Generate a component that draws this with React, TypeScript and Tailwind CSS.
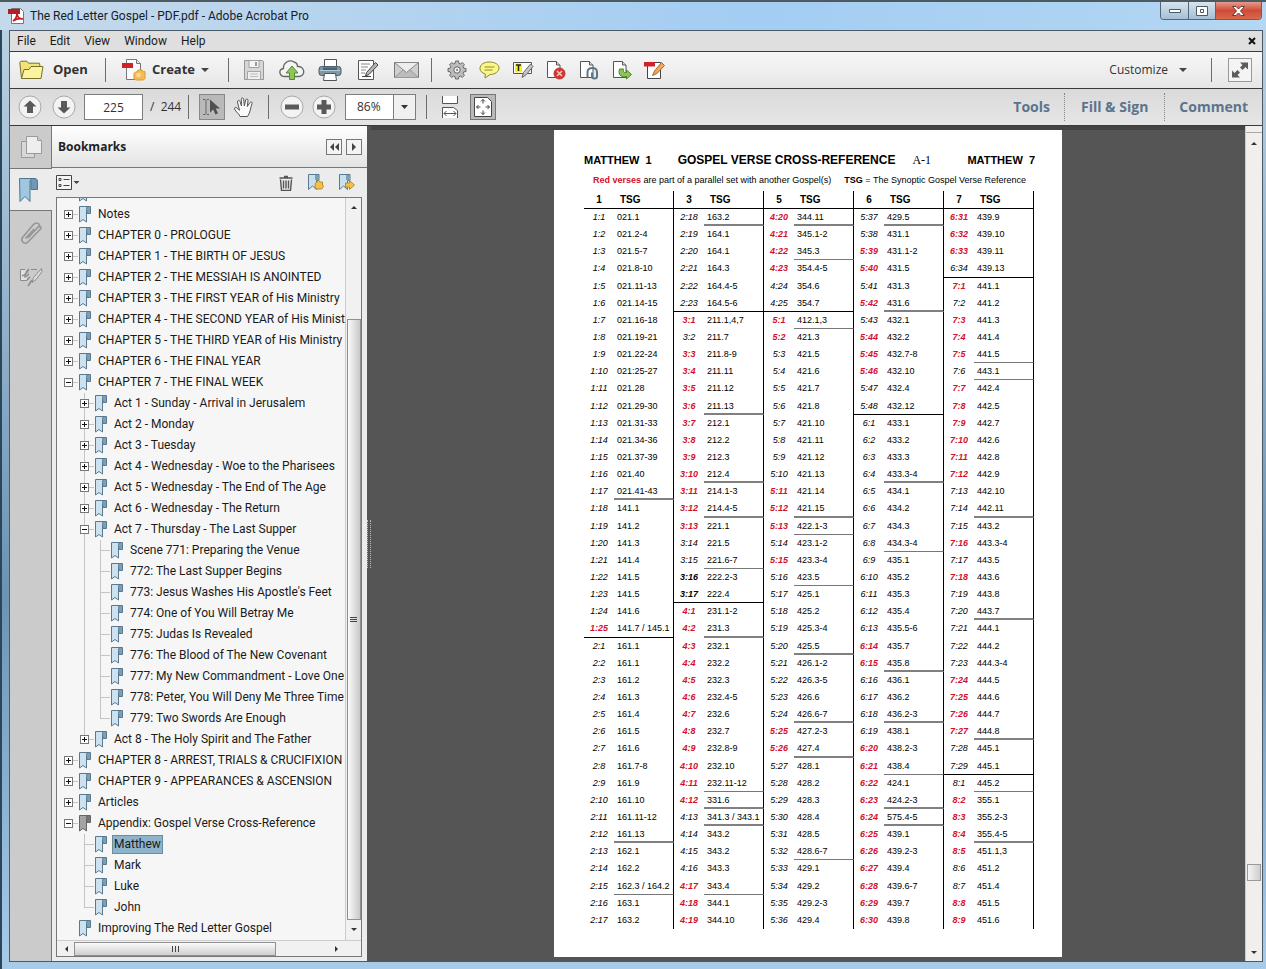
import React, { useState } from "react";
import clsx from "clsx";

interface Bookmark {
  title: string;
  state?: "open" | "closed";
  read?: boolean;
  children?: Bookmark[];
}

const bookmarks: Bookmark[] = [
  { title: "Notes", state: "closed" },
  { title: "CHAPTER 0 - PROLOGUE", state: "closed" },
  { title: "CHAPTER 1 - THE BIRTH OF JESUS", state: "closed" },
  { title: "CHAPTER 2 - THE MESSIAH IS ANOINTED", state: "closed" },
  { title: "CHAPTER 3 - THE FIRST YEAR of His Ministry", state: "closed" },
  { title: "CHAPTER 4 - THE SECOND YEAR of His Ministry", state: "closed" },
  { title: "CHAPTER 5 - THE THIRD YEAR of His Ministry", state: "closed" },
  { title: "CHAPTER 6 - THE FINAL YEAR", state: "closed" },
  {
    title: "CHAPTER 7 - THE FINAL WEEK",
    state: "open",
    children: [
      { title: "Act 1 - Sunday - Arrival in Jerusalem", state: "closed" },
      { title: "Act 2 - Monday", state: "closed" },
      { title: "Act 3 - Tuesday", state: "closed" },
      { title: "Act 4 - Wednesday - Woe to the Pharisees", state: "closed" },
      { title: "Act 5 - Wednesday - The End of The Age", state: "closed" },
      { title: "Act 6 - Wednesday - The Return", state: "closed" },
      {
        title: "Act 7 - Thursday - The Last Supper",
        state: "open",
        children: [
          { title: "Scene 771: Preparing the Venue" },
          { title: "772: The Last Supper Begins" },
          { title: "773: Jesus Washes His Apostle's Feet" },
          { title: "774: One of You Will Betray Me" },
          { title: "775: Judas Is Revealed" },
          { title: "776: The Blood of The New Covenant" },
          { title: "777: My New Commandment - Love One" },
          { title: "778: Peter, You Will Deny Me Three Time" },
          { title: "779: Two Swords Are Enough" },
        ],
      },
      { title: "Act 8 - The Holy Spirit and The Father", state: "closed" },
    ],
  },
  { title: "CHAPTER 8 - ARREST, TRIALS & CRUCIFIXION", state: "closed" },
  { title: "CHAPTER 9 - APPEARANCES & ASCENSION", state: "closed" },
  { title: "Articles", state: "closed" },
  {
    title: "Appendix: Gospel Verse Cross-Reference",
    state: "open",
    read: true,
    children: [
      { title: "Matthew" },
      { title: "Mark" },
      { title: "Luke" },
      { title: "John" },
    ],
  },
  { title: "Improving The Red Letter Gospel" },
];

// Prefix: * red verse, ! bold verse.
// Suffix: _ thin rule, = thick rule, | end of chapter.
const verseColumns = [
  {
    chapter: "1",
    verses:
      "1:1 021.1;1:2 021.2-4;1:3 021.5-7;1:4 021.8-10;1:5 021.11-13;1:6 021.14-15;1:7 021.16-18;1:8 021.19-21;1:9 021.22-24;1:10 021:25-27;1:11 021.28;1:12 021.29-30;1:13 021.31-33;1:14 021.34-36;1:15 021.37-39;1:16 021.40;1:17 021.41-43=;1:18 141.1;1:19 141.2;1:20 141.3;1:21 141.4;1:22 141.5;1:23 141.5;1:24 141.6;*1:25 141.7 / 145.1|;2:1 161.1;2:2 161.1;2:3 161.2;2:4 161.3;2:5 161.4;2:6 161.5;2:7 161.6;2:8 161.7-8;2:9 161.9;2:10 161.10;2:11 161.11-12;2:12 161.13=;2:13 162.1;2:14 162.2;2:15 162.3 / 164.2_;2:16 163.1;2:17 163.2",
  },
  {
    chapter: "3",
    verses:
      "2:18 163.2=;2:19 164.1;2:20 164.1;2:21 164.3;2:22 164.4-5;2:23 164.5-6|;*3:1 211.1,4,7;3:2 211.7;*3:3 211.8-9;*3:4 211.11;*3:5 211.12;*3:6 211.13=;*3:7 212.1;*3:8 212.2;*3:9 212.3;*3:10 212.4=;*3:11 214.1-3;*3:12 214.4-5=;*3:13 221.1;3:14 221.5;3:15 221.6-7_;!3:16 222.2-3;!3:17 222.4|;*4:1 231.1-2;*4:2 231.3=;*4:3 232.1;*4:4 232.2;*4:5 232.3;*4:6 232.4-5;*4:7 232.6;*4:8 232.7;*4:9 232.8-9;*4:10 232.10;*4:11 232.11-12_;*4:12 331.6=;4:13 341.3 / 343.1=;4:14 343.2;4:15 343.2;4:16 343.3;*4:17 343.4_;*4:18 344.1;*4:19 344.10",
  },
  {
    chapter: "5",
    verses:
      "*4:20 344.11=;*4:21 345.1-2;*4:22 345.3_;*4:23 354.4-5;4:24 354.6;4:25 354.7|;*5:1 412.1,3_;*5:2 421.3;5:3 421.5;5:4 421.6;5:5 421.7;5:6 421.8;5:7 421.10;5:8 421.11;5:9 421.12;5:10 421.13;*5:11 421.14;*5:12 421.15=;*5:13 422.1-3_;5:14 423.1-2;*5:15 423.3-4;5:16 423.5_;5:17 425.1;5:18 425.2;5:19 425.3-4;5:20 425.5=;5:21 426.1-2;5:22 426.3-5;5:23 426.6;5:24 426.6-7=;*5:25 427.2-3;*5:26 427.4=;5:27 428.1;5:28 428.2;5:29 428.3;5:30 428.4;5:31 428.5;5:32 428.6-7_;5:33 429.1;5:34 429.2;5:35 429.2-3;5:36 429.4",
  },
  {
    chapter: "6",
    verses:
      "5:37 429.5=;5:38 431.1;*5:39 431.1-2;*5:40 431.5;5:41 431.3;*5:42 431.6=;5:43 432.1;*5:44 432.2;*5:45 432.7-8;*5:46 432.10;5:47 432.4;5:48 432.12|;6:1 433.1;6:2 433.2;6:3 433.3;6:4 433.3-4=;6:5 434.1;6:6 434.2;6:7 434.3;6:8 434.3-4_;6:9 435.1;6:10 435.2;6:11 435.3;6:12 435.4;6:13 435.5-6;*6:14 435.7;*6:15 435.8=;6:16 436.1;6:17 436.2;6:18 436.2-3=;6:19 438.1;*6:20 438.2-3;*6:21 438.4_;*6:22 424.1;*6:23 424.2-3=;*6:24 575.4-5=;*6:25 439.1;*6:26 439.2-3;*6:27 439.4;*6:28 439.6-7;*6:29 439.7;*6:30 439.8",
  },
  {
    chapter: "7",
    verses:
      "*6:31 439.9;*6:32 439.10;*6:33 439.11;6:34 439.13|;*7:1 441.1;7:2 441.2;*7:3 441.3;*7:4 441.4;*7:5 441.5_;7:6 443.1_;*7:7 442.4;*7:8 442.5;*7:9 442.7;*7:10 442.6;*7:11 442.8;*7:12 442.9;7:13 442.10;7:14 442.11=;7:15 443.2;*7:16 443.3-4;7:17 443.5;*7:18 443.6;7:19 443.8;7:20 443.7=;7:21 444.1;7:22 444.2;7:23 444.3-4;*7:24 444.5;*7:25 444.6;*7:26 444.7;*7:27 444.8=;7:28 445.1;7:29 445.1|;8:1 445.2_;*8:2 355.1;*8:3 355.2-3;*8:4 355.4-5=;*8:5 451.1,3;8:6 451.2;8:7 451.4;*8:8 451.5;*8:9 451.6",
  },
];

const parseVerse = (source: string) => {
  const match = source.match(/^([*!]?)(\S+) (.+?)([_=|]?)$/);
  if (!match) {
    return { mark: "", verse: source, reference: "", rule: "" };
  }
  return {
    mark: match[1],
    verse: match[2],
    reference: match[3],
    rule: match[4],
  };
};

const columns = verseColumns.map((column) =>
  column.verses.split(";").map(parseVerse)
);

/* ---------- icons ---------- */

const AcrobatIcon = () => (
  <svg width="17" height="16" viewBox="0 0 17 16">
    <path d="M3.5 .5h9l3 3v12h-12z" fill="#fff" stroke="#777" />
    <path d="M0 1h12v5H0z" fill="#b51f24" />
    <path
      d="M5 13c3-2 4-5 4-8 0 4 2 6 6 6-4-1-7 0-10 2z"
      fill="none"
      stroke="#c8161d"
      strokeWidth="1.6"
    />
  </svg>
);

const FolderIcon = () => (
  <svg width="25" height="20" viewBox="0 0 25 20">
    <path
      d="M2.5 18.5L.8 2.5l1-1.3h6l1.7 2h11l.5 3"
      fill="#f1e27a"
      stroke="#77712f"
    />
    <path d="M2.5 18.5L5 9.500h5l2-3h12l-2 12z" fill="#fbf3a0" stroke="#77712f" />
  </svg>
);

const CreateIcon = () => (
  <svg width="24" height="22" viewBox="0 0 24 22">
    <path d="M4.500 .5h10l4 4v16h-14z" fill="#fafafa" stroke="#777" />
    <path d="M14.500 .5v4h4" fill="#ddd" stroke="#777" />
    <path d="M0 4h11v5H0z" fill="#cf2228" />
    <path
      d="M16 11h4l1.500 1.500h1.500v7l-1.500 1.500h-8l-1.500-1.500v-5l1.500-1.500h1.500z"
      fill="#f6bb52"
      stroke="#d99a38"
    />
    <path d="M14.500 14h4v4h-4z" fill="#fbd894" />
  </svg>
);

const SaveIcon = () => (
  <svg width="22" height="22" viewBox="0 0 22 22">
    <path d="M1.500 1.500h18l1 1v18h-19z" fill="#d6d6d6" stroke="#969696" />
    <path d="M6 1.500h10v7H6z" fill="#f5f5f5" stroke="#a0a0a0" />
    <path d="M12 3h2v4h-2z" fill="#999" />
    <path d="M4.500 12.500h13v8h-13z" fill="#efefef" stroke="#a5a5a5" />
    <path d="M7 15h8M7 17.500h8" stroke="#bbb" />
  </svg>
);

const CloudIcon = () => (
  <svg width="26" height="22" viewBox="0 0 26 22">
    <path
      d="M6 17.500c-6 0-7-7-1.500-8C4 4 10 0 15 3c2 .5 3.500 2.500 3.500 4.500C26 7 27 17 20 17.500z"
      fill="#f4f4f4"
      stroke="#666"
      strokeWidth="1.300"
    />
    <path
      d="M13 7l6 7h-3.500v6.500h-5V14H7z"
      fill="#8cc558"
      stroke="#5b8a35"
    />
  </svg>
);

const PrintIcon = () => (
  <svg width="24" height="24" viewBox="0 0 24 24">
    <path d="M6.500 1.500h12v9h-12z" fill="#fff" stroke="#555" />
    <rect x="1" y="8.500" width="22" height="9" rx="2.500" fill="#7f98a8" stroke="#4a6170" />
    <path d="M5 9.500h14v3H5z" fill="#4a6170" />
    <path d="M2 12.500h20" stroke="#b9cbd6" />
    <path d="M6.500 15.500h11l1 7H5.500z" fill="#fff" stroke="#555" />
  </svg>
);

const SignIcon = () => (
  <svg width="22" height="22" viewBox="0 0 22 22">
    <path d="M1.500 1.500h15v19h-15z" fill="#fff" stroke="#555" />
    <path d="M4 5h9M4 8h7M4 11h5M4 14h4" stroke="#888" />
    <path d="M21 6l-2.500-2.500-9 10-1 3.500 3.500-1.500z" fill="#b5b5b5" stroke="#444" />
    <path d="M5 17.500h9" stroke="#444" />
  </svg>
);

const MailIcon = () => (
  <svg width="25" height="18" viewBox="0 0 25 18">
    <path d="M.5 1.500h24v15H.5z" fill="#cfcfcf" stroke="#777" />
    <path d="M.5 16.500l9-8h6l9 8" fill="#bcbcbc" stroke="#999" />
    <path d="M.5 1.500l12 10 12-10z" fill="#ededed" stroke="#888" />
  </svg>
);

const GearIcon = () => (
  <svg width="20" height="20" viewBox="0 0 20 20">
    <path
      d="M8.500 1h3l.4 2.300 1.500.6L15.300 2.600l2.100 2.100-1.300 1.900.6 1.500 2.300.4v3l-2.300.4-.6 1.500 1.300 1.900-2.100 2.100-1.900-1.300-1.500.6-.4 2.300h-3l-.4-2.300-1.500-.6-1.900 1.300-2.100-2.100 1.300-1.900-.6-1.500L1 11.500v-3l2.300-.4.6-1.500-1.300-1.900 2.100-2.100 1.900 1.300 1.500-.6z"
      fill="#bdbdbd"
      stroke="#666"
    />
    <circle cx="10" cy="10" r="3.200" fill="#eee" stroke="#666" />
    <circle cx="10" cy="10" r="1" fill="#777" />
  </svg>
);

const BubbleIcon = () => (
  <svg width="21" height="18" viewBox="0 0 21 18">
    <path
      d="M10.500 1c5.500 0 9.500 2.500 9.500 6s-4 6.500-9 6.500L6 17l.3-4C3 12 1 10 1 7.500 1 3.500 5 1 10.500 1z"
      fill="#fbf784"
      stroke="#8a8838"
    />
    <path d="M5.500 6h10M5.500 9h8" stroke="#8a8838" />
  </svg>
);

const HighlightTextIcon = () => (
  <svg width="22" height="20" viewBox="0 0 22 20">
    <path d="M1.500 2.500h18v11h-18z" fill="#fff" stroke="#555" />
    <path d="M3 3.500h7v9H3z" fill="#f8f01c" />
    <path d="M4 5h5M6.500 5v6" stroke="#222" strokeWidth="1.500" />
    <path d="M18.500 4l2.500 2.500-6.500 8-4.500 3 1.500-5z" fill="#c5c5c5" stroke="#666" />
  </svg>
);

const PageIcon = ({ children }: { children?: React.ReactNode }) => (
  <svg width="21" height="20" viewBox="0 0 21 20">
    <path d="M2.500 1.500h9l3.500 3.500v12.500H2.500z" fill="#fff" stroke="#555" />
    <path d="M11.500 1.500v3.500H15" fill="#ddd" stroke="#555" />
    {children}
  </svg>
);

const DeletePageIcon = () => (
  <PageIcon>
    <circle cx="14.500" cy="13.500" r="5.500" fill="#d8342e" stroke="#b23a36" />
    <path d="M12 11l5 5M17 11l-5 5" stroke="#f3c9c7" strokeWidth="1.500" />
  </PageIcon>
);

const AttachPageIcon = () => (
  <PageIcon>
    <path
      d="M9.500 12c0-5.500 9.500-5.500 9.500 0v4.500c0 2.500-5 2.500-5 0v-4"
      fill="none"
      stroke="#5b7688"
      strokeWidth="2"
    />
    <path d="M9.500 12v5" stroke="#5b7688" strokeWidth="2" />
  </PageIcon>
);

const ExtractPageIcon = () => (
  <PageIcon>
    <path
      d="M8.500 9c-2 7 3 8.500 7 7.500v2.500l5-4.500-5-4.500v2.500c-2 .5-4-.5-3-3.500z"
      fill="#8cc558"
      stroke="#4f8326"
    />
  </PageIcon>
);

const EditPdfIcon = () => (
  <svg width="21" height="20" viewBox="0 0 21 20">
    <path d="M3.500 2.500h13v16h-13z" fill="#fff" stroke="#444" />
    <path d="M0 2h11v4.500H0z" fill="#cf2228" />
    <path d="M17.500 2.500L20.500 5.500l-7.500 8-4.500 2 2-4.500z" fill="#f2a658" stroke="#9a6c3d" />
  </svg>
);

const ExpandIcon = () => (
  <svg width="18" height="18" viewBox="0 0 18 18" fill="#5c5c5c">
    <path d="M9 1.500h8v7l-2.500-2.500-3 3L9 6.500l2.500-2.500z" />
    <path d="M9 16.500H1v-7L3.500 12l3-3L9 11.500 6.500 14z" />
  </svg>
);

const Caret = () => (
  <svg width="8" height="4" viewBox="0 0 8 4">
    <path d="M0 0h8L4 4z" fill="#444" />
  </svg>
);

const RoundIcon = ({ d }: { d: string }) => (
  <svg width="24" height="24" viewBox="0 0 24 24">
    <circle cx="12" cy="12" r="11" fill="#f3f3f3" stroke="#a8a8a8" />
    <path d={d} fill="#5a5a5a" />
  </svg>
);

const SelectToolIcon = () => (
  <svg width="20" height="18" viewBox="0 0 20 18">
    <path d="M1 1.500h2.500M5 1.500h2M4 2v14M1 16.500h2.500M5 16.500h2" stroke="#666" />
    <path d="M8 1.500v13l3.200-3 2.300 5 2.500-1.200-2.300-4.800H18z" fill="#505050" />
  </svg>
);

const HandIcon = () => (
  <svg width="22" height="21" viewBox="0 0 22 21">
    <path
      d="M7 19.500c-.5-2.500-4-4.500-5.500-7.500-.5-1.500 1.500-2 2.500-1l2.500 2.300L4.500 5c-.3-1.800 2-2.200 2.500-.5L8.500 9l-.2-6.800c0-1.700 2.200-1.700 2.400 0L11.300 9l1.400-6c.4-1.600 2.500-1.200 2.300.5L14.300 9.500l2.700-4c.9-1.300 2.700-.3 2 1.200-1.500 3.500-1.500 8.800-4.500 12.800z"
      fill="#fafafa"
      stroke="#555"
    />
  </svg>
);

const FitWidthIcon = () => (
  <svg width="18" height="22" viewBox="0 0 18 22" fill="none" stroke="#555">
    <path d="M1.500 0v7.500h15V0M1.500 22V11.500h11l4 3V22" fill="#fff" />
    <path d="M3 17.500h12M5.500 15L3 17.500 5.500 20M12.500 15l2.500 2.500-2.500 2.500" />
  </svg>
);

const FitPageIcon = () => (
  <svg width="18" height="20" viewBox="0 0 18 20" fill="none" stroke="#444">
    <path d="M.5.5h13l4 4v15H.5z" fill="#fff" />
    <path d="M9 2.500v4M9 13.500v4M2.500 10h4M11.500 10h4M7 4.500l2-2 2 2M7 15.500l2 2 2-2M4.500 8l-2 2 2 2M13.500 8l2 2-2 2" />
  </svg>
);

const PagesIcon = () => (
  <svg width="22" height="23" viewBox="0 0 22 23" stroke="#9a9a9a">
    <path d="M1.500 5.500h13v16h-13z" fill="#d8d8d8" />
    <path d="M6.500.5h11l4 4v13h-15z" fill="#eee" />
    <path d="M17.500.5v4h4" fill="#ccc" />
  </svg>
);

const BookmarksTabIcon = () => (
  <svg width="19" height="24" viewBox="0 0 19 24" stroke="#4d7590">
    <path d="M9 .5h7c2 0 2.500 2 2.500 4v7H12V4z" fill="#6f9ab5" />
    <path d="M.5.5H13c-2 1-2 3-2 5v18l-5-5-5 5z" fill="#9fc8e0" />
  </svg>
);

const ClipIcon = () => (
  <svg width="24" height="24" viewBox="0 0 24 24" fill="none" stroke="#959595" strokeWidth="1.500">
    <path d="M9 17L19 6c1.500-2 4 0 2.500 2L9 21c-3 3-8-.5-5.500-4.500L14 4c3.500-4 8-1 6 2.500M6.500 17.500L15 8" />
  </svg>
);

const SignaturesIcon = () => (
  <svg width="24" height="20" viewBox="0 0 24 20" fill="none" stroke="#8b8b8b">
    <path d="M6 2.500H1.500v11H8M12 2.500h6" fill="#e2e2e2" />
    <path d="M3 9c3-1 6-5 7-7-2 2-4 6-4 8 2 0 3-3 4-3" strokeWidth="1.500" />
    <path d="M22.500 1.500l-8 9-1.500 5 4-3 6-8z" fill="#ddd" />
    <path d="M9 19l4-6M8 13l3-3" strokeWidth="1.500" />
  </svg>
);

const BookmarkIcon = ({ read }: { read?: boolean }) => (
  <svg
    className="shrink-0"
    width="13"
    height="17"
    viewBox="0 0 13 17"
    stroke={read ? "#666" : "#587a90"}
  >
    <path d="M8 .5h4.500v7H9z" fill={read ? "#777" : "#7c9fb5"} />
    <path
      d="M1.500 .5H10C8.500 1 8.500 2 8.500 3.500v12.500L5 13.500l-3.500 2.500z"
      fill={read ? "#a3a3a3" : "#cde2ee"}
    />
  </svg>
);

const TrashIcon = () => (
  <svg width="14" height="16" viewBox="0 0 14 16" fill="none" stroke="#555">
    <path d="M5 1.500h4M.5 3h13" strokeWidth="1.500" />
    <path d="M1.500 4.500l1 11h9l1-11M4.500 5.500v8M7 5.500v8M9.500 5.500v8" strokeWidth="1.400" />
  </svg>
);

const NewBookmarkIcon = ({ d }: { d: string }) => (
  <svg width="17" height="17" viewBox="0 0 17 17">
    <path d="M1.500 .5H12v6H9.500v9L5.500 12l-4 3.500z" fill="#c9e0ed" stroke="#587a90" />
    <path d="M8 1h4v5H8z" fill="#7c9fb5" />
    <path d={d} fill="#f3c04a" stroke="#b98a2c" />
  </svg>
);

const OptionsIcon = () => (
  <svg width="24" height="15" viewBox="0 0 24 15" fill="none" stroke="#444">
    <path d="M.5.5h15v14H.5z" fill="#f4f4f4" />
    <path d="M3 3.500h2v2H3zM3 9.500h2v2H3zM7.500 4.500h6M7.500 10.500h6" />
    <path d="M17.500 6h6l-3 3z" fill="#444" stroke="none" />
  </svg>
);

const Arrow = ({ dir }: { dir: "up" | "down" | "left" | "right" }) => {
  const paths = {
    up: "M1 6l3-3 3 3z",
    down: "M1 2l3 3 3-3z",
    left: "M6 1L3 4l3 3z",
    right: "M2 1l3 3-3 3z",
  };
  return (
    <svg width="8" height="8" viewBox="0 0 8 8">
      <path d={paths[dir]} fill="#333" />
    </svg>
  );
};

/* ---------- window chrome ---------- */

const TitleBar = () => (
  <header className="flex h-[30px] shrink-0 items-start justify-between border-t-2 border-[#4d5a60] bg-linear-to-r from-[#c5d9ea] via-[#a3cdf3] via-60% to-[#b4d7f2]">
    <div className="flex items-center gap-[5px] pt-1 pl-2">
      <AcrobatIcon />
      <h1 className="font-['Roboto',sans-serif] text-xs leading-5 text-[#14202c]">
        The Red Letter Gospel - PDF.pdf - Adobe Acrobat Pro
      </h1>
    </div>
    <div className="mr-1 flex h-[18px] overflow-hidden rounded-b border border-t-0 border-[#526779]">
      <button
        aria-label="Minimize"
        className="flex w-7 items-center justify-center border-r border-[#526779] bg-linear-to-b from-[#d7e4ef] to-[#a5bfd5]"
      >
        <svg width="12" height="6" viewBox="0 0 12 6">
          <path d="M.5 1.500h11v3H.5z" fill="#fff" stroke="#4b5b69" />
        </svg>
      </button>
      <button
        aria-label="Restore"
        className="flex w-[27px] items-center justify-center border-r border-[#526779] bg-linear-to-b from-[#d7e4ef] to-[#a5bfd5]"
      >
        <svg width="12" height="10" viewBox="0 0 12 10" fill="#fff" stroke="#4b5b69">
          <path d="M.5.5h11v9H.5zM4.500 3.500h3v3h-3z" />
        </svg>
      </button>
      <button
        aria-label="Close"
        className="flex w-[45px] items-center justify-center bg-linear-to-b from-[#e59a8b] via-[#cf4b39] to-[#d8694a]"
      >
        <svg width="13" height="10" viewBox="0 0 13 10">
          <path
            d="M.5.5H4l2.500 2.500L9 .5h3.500L8.500 5l4 4.500H9L6.500 7 4 9.500H.5l4-4.500z"
            fill="#fff"
            stroke="#6e3a35"
          />
        </svg>
      </button>
    </div>
  </header>
);

const MenuBar = () => (
  <nav className="flex h-[21px] shrink-0 items-center border-b border-[#3a3a3a] bg-[#dfdfdf] pr-[6px] font-['Roboto',sans-serif] text-xs text-[#1b1b1b]">
    {["File", "Edit", "View", "Window", "Help"].map((item) => (
      <button key={item} className="px-[7px]">
        {item}
      </button>
    ))}
    <button aria-label="Close document" className="ml-auto">
      <svg width="8" height="8" viewBox="0 0 8 8">
        <path d="M1 1l6 6M7 1L1 7" stroke="#111" strokeWidth="2" />
      </svg>
    </button>
  </nav>
);

const Separator = () => <div className="h-6 w-px shrink-0 bg-[#6c6c6c]" />;

interface ToolButtonProps {
  label: string;
  wide?: boolean;
  children: React.ReactNode;
}

const ToolButton: React.FC<ToolButtonProps> = ({ label, wide, children }) => (
  <button
    aria-label={label}
    className={clsx(
      "flex h-7 shrink-0 items-center justify-center",
      wide ? "w-[38px]" : "w-[33px]"
    )}
  >
    {children}
  </button>
);

const MainToolbar = () => (
  <div className="flex h-[37px] shrink-0 items-center border-b border-[#3a3a3a] bg-linear-to-b from-[#f7f7f7] to-[#e6e6e6] text-[13px] text-[#333]">
    <button className="flex w-[95px] items-center gap-[9px] pl-[9px] font-bold">
      <FolderIcon />
      Open
    </button>
    <Separator />
    <button className="flex w-[122px] items-center gap-[6px] pl-4 font-bold">
      <CreateIcon />
      Create
      <Caret />
    </button>
    <Separator />
    <div className="flex px-[6px]">
      <ToolButton wide label="Save">
        <SaveIcon />
      </ToolButton>
      <ToolButton wide label="Save to cloud">
        <CloudIcon />
      </ToolButton>
      <ToolButton wide label="Print">
        <PrintIcon />
      </ToolButton>
      <ToolButton wide label="Sign">
        <SignIcon />
      </ToolButton>
      <ToolButton wide label="Email">
        <MailIcon />
      </ToolButton>
    </div>
    <Separator />
    <div className="flex pl-2">
      <ToolButton label="Settings">
        <GearIcon />
      </ToolButton>
      <ToolButton label="Comment">
        <BubbleIcon />
      </ToolButton>
      <ToolButton label="Highlight text">
        <HighlightTextIcon />
      </ToolButton>
      <ToolButton label="Delete pages">
        <DeletePageIcon />
      </ToolButton>
      <ToolButton label="Attach file">
        <AttachPageIcon />
      </ToolButton>
      <ToolButton label="Extract pages">
        <ExtractPageIcon />
      </ToolButton>
      <ToolButton label="Edit PDF">
        <EditPdfIcon />
      </ToolButton>
    </div>
    <button className="mr-6 ml-auto flex items-center gap-[11px] text-xs">
      Customize
      <Caret />
    </button>
    <Separator />
    <button
      aria-label="Read mode"
      className="mr-[10px] ml-4 flex h-6 w-6 items-center justify-center border border-[#999] bg-[#f4f4f4]"
    >
      <ExpandIcon />
    </button>
  </div>
);

const NavToolbar = () => {
  const [page, setPage] = useState("225");
  const [zoom, setZoom] = useState("86%");

  return (
    <div className="flex h-[37px] shrink-0 items-center border-b border-[#3a3a3a] bg-linear-to-b from-[#dadada] to-[#e6e6e6] pl-[3px] text-xs text-[#333]">
      <button aria-label="Previous page" className="flex w-[34px] justify-center">
        <RoundIcon d="M12 5.500l6.500 6H15V18H9v-6.500H5.500z" />
      </button>
      <button aria-label="Next page" className="flex w-[34px] justify-center">
        <RoundIcon d="M12 18.500l6.500-6H15V6H9v6.500H5.500z" />
      </button>
      <input
        aria-label="Page number"
        value={page}
        onChange={(e) => setPage(e.target.value)}
        className="ml-[3px] h-[26px] w-[59px] border border-[#7d7d7d] bg-white text-center"
      />
      <span className="w-[45px] pl-[7px] whitespace-pre">/  244</span>
      <Separator />
      <button
        aria-label="Select tool"
        className="ml-[10px] flex h-[26px] w-[26px] items-center justify-center border border-[#888] bg-[#b9b9b9]"
      >
        <SelectToolIcon />
      </button>
      <button aria-label="Hand tool" className="mr-[5px] flex w-[38px] justify-center">
        <HandIcon />
      </button>
      <Separator />
      <button aria-label="Zoom out" className="ml-[7px] flex w-8 justify-center">
        <RoundIcon d="M5 9.500h14v5H5z" />
      </button>
      <button aria-label="Zoom in" className="flex w-8 justify-center">
        <RoundIcon d="M9.500 5h5v4.500H19v5h-4.500V19h-5v-4.500H5v-5h4.500z" />
      </button>
      <div className="relative mr-[10px] ml-[5px]">
        <select
          aria-label="Zoom"
          value={zoom}
          onChange={(e) => setZoom(e.target.value)}
          className="block h-[26px] w-[71px] appearance-none border border-[#7d7d7d] bg-white pl-[11px]"
        >
          <option>50%</option>
          <option>86%</option>
          <option>100%</option>
        </select>
        <span className="pointer-events-none absolute inset-y-0 right-0 flex w-[23px] items-center justify-center border border-[#7d7d7d] bg-[#f0f0f0]">
          <svg width="7" height="4" viewBox="0 0 7 4">
            <path d="M0 0h7L3.500 4z" fill="#333" />
          </svg>
        </span>
      </div>
      <Separator />
      <button aria-label="Fit width" className="ml-[3px] flex w-10 justify-center">
        <FitWidthIcon />
      </button>
      <button
        aria-label="Fit page"
        className="flex h-[26px] w-[26px] items-center justify-center border border-[#777] bg-[#b9b9b9]"
      >
        <FitPageIcon />
      </button>
      <div className="ml-auto flex h-7 items-stretch text-sm font-bold text-[#5b748c]">
        <button className="px-[14px]">Tools</button>
        <button className="border-x border-dotted border-[#888] px-4">
          Fill &amp; Sign
        </button>
        <button className="px-[14px]">Comment</button>
      </div>
    </div>
  );
};

/* ---------- side panel ---------- */

const SideTabs = () => (
  <div className="flex w-[42px] shrink-0 flex-col items-center border-r border-[#777] bg-[#cbcbcb] text-center">
    <button aria-label="Page thumbnails" className="flex h-[42px] items-center">
      <PagesIcon />
    </button>
    <button
      aria-label="Bookmarks"
      className="-mr-px flex h-[43px] items-center self-stretch border-y border-[#777] bg-[#ececec] pl-[9px]"
    >
      <BookmarksTabIcon />
    </button>
    <button aria-label="Attachments" className="flex h-11 items-center">
      <ClipIcon />
    </button>
    <button aria-label="Signatures" className="flex h-11 items-center">
      <SignaturesIcon />
    </button>
  </div>
);

interface BookmarkListProps {
  items: Bookmark[];
  nested?: boolean;
  selected: string;
  onSelect: (title: string) => void;
}

const BookmarkList: React.FC<BookmarkListProps> = ({
  items,
  nested,
  selected,
  onSelect,
}) => (
  <ul className={nested ? "ml-4" : ""}>
    {items.map((item, index) => (
      <li key={item.title} className="relative">
        {nested && (
          <span
            className={clsx(
              "absolute top-0 left-1 border-l border-[#c4c4c4]",
              index === items.length - 1 ? "h-[10px]" : "h-full"
            )}
          />
        )}
        <div className="relative flex h-[21px] items-center">
          <span className="flex w-[14px] shrink-0 items-center">
            {item.state ? (
              <button
                aria-label={item.state === "open" ? "Collapse" : "Expand"}
                className="flex h-[9px] w-[9px] shrink-0 items-center justify-center border border-[#777] bg-white"
              >
                <svg width="5" height="5" viewBox="0 0 5 5" stroke="#111">
                  <path d={item.state === "open" ? "M0 2.500h5" : "M0 2.500h5M2.500 0v5"} />
                </svg>
              </button>
            ) : (
              <span className="w-1 shrink-0" />
            )}
            {(nested || item.state) && (
              <span className="h-px grow bg-[#c4c4c4]" />
            )}
          </span>
          <BookmarkIcon read={item.read} />
          <button
            onClick={() => onSelect(item.title)}
            className={clsx(
              "ml-[6px] h-[17px] px-px text-xs leading-[17px] whitespace-nowrap",
              selected === item.title && "bg-[#8db4cb] outline outline-[#6b8ba0]"
            )}
          >
            {item.title}
          </button>
        </div>
        {item.children && (
          <BookmarkList
            nested
            items={item.children}
            selected={selected}
            onSelect={onSelect}
          />
        )}
      </li>
    ))}
  </ul>
);

const BookmarksPanel = () => {
  const [selected, setSelected] = useState("Matthew");

  return (
    <section className="flex w-[315px] shrink-0 flex-col bg-[#ececec] pb-1">
      <div className="flex h-[42px] shrink-0 items-center gap-1 border-b border-[#777] bg-linear-to-b from-white to-[#e4e4e4] pr-[5px] pl-[6px]">
        <h2 className="mr-auto text-xs font-bold text-[#222]">Bookmarks</h2>
        <button
          aria-label="Collapse panel"
          className="flex h-4 w-4 items-center justify-center border border-[#777] bg-[#f4f4f4]"
        >
          <svg width="10" height="8" viewBox="0 0 10 8" fill="#444">
            <path d="M5 0v8L1 4zM10 0v8L6 4z" />
          </svg>
        </button>
        <button
          aria-label="Expand panel"
          className="flex h-4 w-4 items-center justify-center border border-[#777] bg-[#f4f4f4]"
        >
          <svg width="6" height="8" viewBox="0 0 6 8" fill="#444">
            <path d="M1 0v8l4-4z" />
          </svg>
        </button>
      </div>
      <div className="flex h-[29px] shrink-0 items-center pr-3 pl-1">
        <button aria-label="Options" className="mr-auto">
          <OptionsIcon />
        </button>
        <div className="flex gap-[14px]">
          <button aria-label="Delete bookmark">
            <TrashIcon />
          </button>
          <button aria-label="New bookmark">
            <NewBookmarkIcon d="M11.500 6.500l1.500 1.500h2.500v3l1 1.500-2 2.500h-5l-1.500-2 .5-4z" />
          </button>
          <button aria-label="Next bookmark">
            <NewBookmarkIcon d="M7.500 9h4V6.500l5 4.500-5 4.500V13h-4z" />
          </button>
        </div>
      </div>
      <div className="mr-[5px] ml-1 flex min-h-0 grow flex-col border border-[#777] bg-[#f6f6f6]">
        <div className="flex min-h-0 grow">
          <div className="min-w-0 grow overflow-hidden pl-[7px] font-['Roboto',sans-serif] text-[#1a1a1a]">
            <div className="flex h-[6px] items-end overflow-hidden pb-[2px] pl-[14px]">
              <BookmarkIcon />
            </div>
            <BookmarkList
              items={bookmarks}
              selected={selected}
              onSelect={setSelected}
            />
          </div>
          <div className="flex w-4 shrink-0 flex-col items-center border-l border-[#ccc] bg-[#f1f1f1]">
            <span className="flex h-[18px] items-center">
              <Arrow dir="up" />
            </span>
            <span className="flex-[104]" />
            <span className="flex w-[14px] flex-[602] flex-col items-center justify-center gap-px border border-[#8f8f8f] bg-linear-to-r from-[#fafafa] to-[#c9c9c9]">
              <i className="h-px w-[7px] bg-[#444]" />
              <i className="h-px w-[7px] bg-[#444]" />
              <i className="h-px w-[7px] bg-[#444]" />
            </span>
            <span className="flex h-5 items-center">
              <Arrow dir="down" />
            </span>
          </div>
        </div>
        <div className="flex h-4 shrink-0 items-center border-t border-[#ccc] bg-[#f1f1f1] pr-4">
          <span className="flex w-[17px] justify-center">
            <Arrow dir="left" />
          </span>
          <span className="flex h-[14px] flex-[202] items-center justify-center gap-[2px] border border-[#8f8f8f] bg-linear-to-b from-[#fafafa] to-[#cfcfcf]">
            <i className="h-[6px] w-px bg-[#444]" />
            <i className="h-[6px] w-px bg-[#444]" />
            <i className="h-[6px] w-px bg-[#444]" />
          </span>
          <span className="flex-[53]" />
          <span className="flex w-4 justify-center">
            <Arrow dir="right" />
          </span>
        </div>
      </div>
    </section>
  );
};

/* ---------- document ---------- */

const VerseTable = () => (
  <table className="h-[738px] w-[450px] table-fixed border-separate border-spacing-0 text-[9px] leading-none">
    <colgroup>
      {columns.map((_, i) => (
        <React.Fragment key={i}>
          <col className="w-[30px]" />
          <col className="w-[60px]" />
        </React.Fragment>
      ))}
    </colgroup>
    <thead>
      <tr className="h-[18px] text-[10px]">
        {verseColumns.map((column) => (
          <React.Fragment key={column.chapter}>
            <th className="border-b border-black p-0 text-center">
              {column.chapter}
            </th>
            <th className="border-r border-b border-black p-0 pl-[6px] text-left">
              TSG
            </th>
          </React.Fragment>
        ))}
      </tr>
    </thead>
    <tbody>
      {columns[0].map((_, row) => (
        <tr key={row} className="h-[17px]">
          {columns.map((column, i) => {
            const { mark, verse, reference, rule } = column[row];
            return (
              <React.Fragment key={i}>
                <td
                  className={clsx(
                    "p-0 text-center italic",
                    mark === "*" && "font-bold text-[#d5102c]",
                    mark === "!" && "font-bold",
                    rule === "|" && "border-b border-black pt-px"
                  )}
                >
                  {verse}
                </td>
                <td
                  className={clsx(
                    "border-r border-r-black p-0 pl-[3px] whitespace-nowrap",
                    rule === "|" && "border-b border-b-black pt-px",
                    rule === "_" && "border-b border-b-[#777] pt-px",
                    rule === "=" && "border-b-2 border-b-[#808080] pt-[2px]"
                  )}
                >
                  {reference}
                </td>
              </React.Fragment>
            );
          })}
        </tr>
      ))}
    </tbody>
  </table>
);

const DocumentPage = () => (
  <article className="mx-auto w-[508px] bg-white pt-[22px] pr-[27px] pb-7 pl-[30px] font-['Liberation_Sans',Arial,sans-serif] text-black">
    <div className="flex h-4 items-center text-[11px] font-bold whitespace-pre">
      <span>MATTHEW  1</span>
      <span className="mr-auto ml-[26px] flex items-center gap-[17px] text-xs">
        GOSPEL VERSE CROSS-REFERENCE
        <span className="font-['Liberation_Serif',serif] font-normal">A-1</span>
      </span>
      <span>MATTHEW  7</span>
    </div>
    <div className="flex h-[23px] items-center justify-between px-[9px] pt-[2px] text-[9px] whitespace-nowrap">
      <p>
        <b className="text-[#d5102c]">Red verses</b> are part of a parallel set
        with another Gospel(s)
      </p>
      <p>
        <b>TSG</b> = The Synoptic Gospel Verse Reference
      </p>
    </div>
    <VerseTable />
  </article>
);

const DocumentView = () => (
  <main className="flex min-w-0 grow bg-[#555]">
    <div className="flex w-1 shrink-0 items-center">
      <div className="h-12 w-1 border-x border-dotted border-[#bbb]" />
    </div>
    <div className="min-w-0 grow overflow-hidden border-t-4 border-[#444]">
      <DocumentPage />
    </div>
    <div className="flex w-[17px] shrink-0 flex-col items-center border-l border-[#ccc] bg-[#f0efed]">
      <span className="h-[7px] w-full border-b border-[#aaa]" />
      <span className="flex h-5 items-center">
        <Arrow dir="up" />
      </span>
      <span className="flex-[710]" />
      <span className="h-[17px] w-[14px] border border-[#999] bg-linear-to-r from-[#f5f5f5] to-[#cfcfcf]" />
      <span className="flex-[64]" />
      <span className="flex h-4 items-center">
        <Arrow dir="down" />
      </span>
    </div>
  </main>
);

export default function App() {
  return (
    <div className="flex h-screen flex-col bg-[#a9cbea] font-['Open_Sans','Noto_Sans',sans-serif]">
      <TitleBar />
      <div className="flex min-h-0 grow border-l-2 border-[#29465a] bg-linear-to-b from-[#b9d0e2] via-[#6d93b3] via-60% to-[#a8cbea] pr-[3px] pb-[7px] pl-[7px]">
        <div className="flex min-w-0 grow flex-col border border-[#4a5a66]">
          <MenuBar />
          <MainToolbar />
          <NavToolbar />
          <div className="flex min-h-0 grow">
            <SideTabs />
            <BookmarksPanel />
            <DocumentView />
          </div>
        </div>
      </div>
    </div>
  );
}
